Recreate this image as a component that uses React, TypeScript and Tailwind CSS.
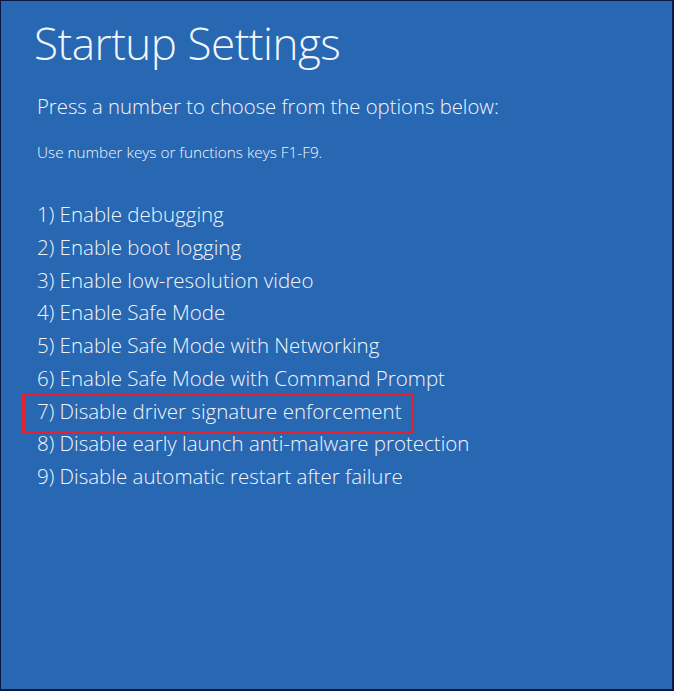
import React from "react";

const items = [
  "1) Enable debugging",
  "2) Enable boot logging",
  "3) Enable low-resolution video",
  "4) Enable Safe Mode",
  "5) Enable Safe Mode with Networking",
  "6) Enable Safe Mode with Command Prompt",
  "7) Disable driver signature enforcement",
  "8) Disable early launch anti-malware protection",
  "9) Disable automatic restart after failure",
];

export default function App() {
  return (
    <div
      className="w-[674px] h-[691px] bg-[#2867b2] border-t border-l border-r-2 border-b-2 border-[#0b1a45] text-[#f2f6fb] overflow-hidden"
      style={{ fontFamily: '"Open Sans", "Noto Sans", sans-serif' }}
    >
      <div className="flex flex-col pl-[33px] pt-[14px]">
        <h1 className="text-[44px] leading-[56px] font-light tracking-[-0.5px]">Startup Settings</h1>
        <p className="mt-[22px] ml-[3px] text-[20.3px] leading-[26px] font-light">
          Press a number to choose from the options below:
        </p>
        <p className="mt-[23px] ml-[3px] text-[15.3px] leading-[20px] font-light">
          Use number keys or functions keys F1-F9.
        </p>
        <ul className="mt-[36px] ml-[3px] flex flex-col">
          {items.map((t, i) => (
            <li key={i} className="relative text-[20.5px] leading-[32.75px] font-light">
              {t}
              {i === 6 && (
                <span className="absolute left-[-15px] w-[392px] top-[-2px] bottom-[-7px] border-[3px] border-[#e2202e]" />
              )}
            </li>
          ))}
        </ul>
      </div>
    </div>
  );
}
